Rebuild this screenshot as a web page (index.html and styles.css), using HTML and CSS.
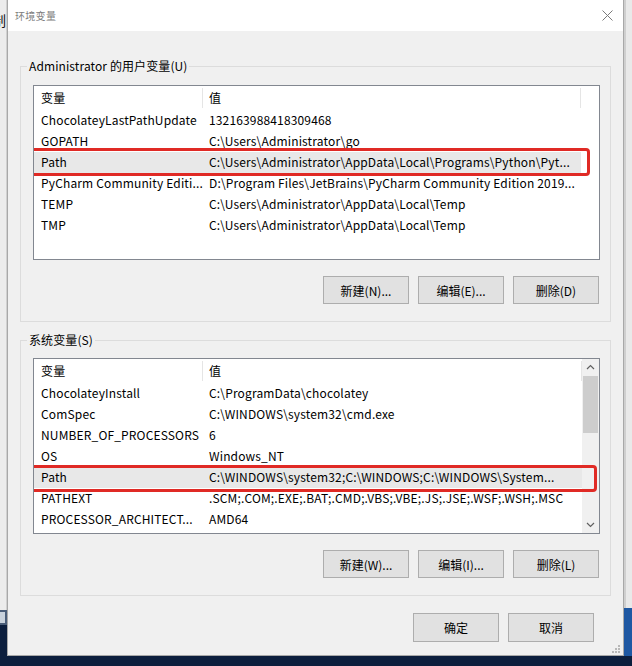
FILE: index.html
```html
<!DOCTYPE html>
<html lang="zh-CN">
<head>
<meta charset="utf-8">
<title>环境变量</title>
<link rel="stylesheet" href="styles.css">
</head>
<body>
<div class="desk-left">
  <div class="dl-top"><span class="cut-char">制</span></div>
  <div class="dl-icon"></div>
</div>
<div class="dialog">
  <div class="titlebar">
    <span class="title">环境变量</span>
    <svg class="close" width="11" height="11" viewBox="0 0 11 11"><path d="M0.5 0.5L10.5 10.5M10.5 0.5L0.5 10.5" stroke="#7a7a7a" stroke-width="1" fill="none"/></svg>
  </div>
  <div class="body">
    <div class="group">
      <div class="gtitle">Administrator 的用户变量(U)</div>
      <div class="list list-user">
        <div class="lhead"><div class="c1">变量</div><div class="c2">值</div><div class="c3"></div></div>
        <div class="row"><div class="c1">ChocolateyLastPathUpdate</div><div class="c2">132163988418309468</div></div>
        <div class="row"><div class="c1">GOPATH</div><div class="c2">C:\Users\Administrator\go</div></div>
        <div class="row sel mark-user"><div class="c1">Path</div><div class="c2">C:\Users\Administrator\AppData\Local\Programs\Python\Pyt...</div></div>
        <div class="row"><div class="c1">PyCharm Community Editi...</div><div class="c2">D:\Program Files\JetBrains\PyCharm Community Edition 2019...</div></div>
        <div class="row"><div class="c1">TEMP</div><div class="c2">C:\Users\Administrator\AppData\Local\Temp</div></div>
        <div class="row"><div class="c1">TMP</div><div class="c2">C:\Users\Administrator\AppData\Local\Temp</div></div>
      </div>
      <div class="btns">
        <button class="btn">新建(N)...</button>
        <button class="btn">编辑(E)...</button>
        <button class="btn">删除(D)</button>
      </div>
    </div>

    <div class="group group-sys">
      <div class="gtitle">系统变量(S)</div>
      <div class="list list-sys">
        <div class="lbody">
          <div class="lhead"><div class="c1">变量</div><div class="c2">值</div></div>
          <div class="row"><div class="c1">ChocolateyInstall</div><div class="c2">C:\ProgramData\chocolatey</div></div>
          <div class="row"><div class="c1">ComSpec</div><div class="c2">C:\WINDOWS\system32\cmd.exe</div></div>
          <div class="row"><div class="c1">NUMBER_OF_PROCESSORS</div><div class="c2">6</div></div>
          <div class="row"><div class="c1">OS</div><div class="c2">Windows_NT</div></div>
          <div class="row sel mark-sys"><div class="c1">Path</div><div class="c2">C:\WINDOWS\system32;C:\WINDOWS;C:\WINDOWS\System...</div></div>
          <div class="row"><div class="c1">PATHEXT</div><div class="c2">.SCM;.COM;.EXE;.BAT;.CMD;.VBS;.VBE;.JS;.JSE;.WSF;.WSH;.MSC</div></div>
          <div class="row"><div class="c1">PROCESSOR_ARCHITECT...</div><div class="c2">AMD64</div></div>
        </div>
        <div class="vscroll">
          <svg class="arrow" width="17" height="17" viewBox="0 0 17 17"><path d="M5 10L8.5 6.5L12 10" stroke="#606060" stroke-width="1.2" fill="none"/></svg>
          <div class="thumb"></div>
          <div class="track"></div>
          <svg class="arrow" width="17" height="17" viewBox="0 0 17 17"><path d="M5 7L8.5 10.5L12 7" stroke="#606060" stroke-width="1.2" fill="none"/></svg>
        </div>
      </div>
      <div class="btns">
        <button class="btn">新建(W)...</button>
        <button class="btn">编辑(I)...</button>
        <button class="btn">删除(L)</button>
      </div>
    </div>

    <div class="footer">
      <button class="btn btn-lg">确定</button>
      <button class="btn btn-lg">取消</button>
    </div>
  </div>
  <svg class="grip" width="9" height="9" viewBox="0 0 9 9" fill="#b8b8b8">
    <rect x="7" y="1" width="2" height="2"/>
    <rect x="4" y="4" width="2" height="2"/><rect x="7" y="4" width="2" height="2"/>
    <rect x="1" y="7" width="2" height="2"/><rect x="4" y="7" width="2" height="2"/><rect x="7" y="7" width="2" height="2"/>
  </svg>
</div>
<div class="desk-right">
  <div class="dr-top"></div>
  <div class="dr-blue"></div>
</div>
<div class="desk-bottom"></div>
</body>
</html>
```

FILE: styles.css
```css
* { box-sizing: border-box; }

body {
  margin: 0;
  width: 632px;
  height: 666px;
  overflow: hidden;
  display: grid;
  grid-template-columns: 7px 617px 8px;
  grid-template-rows: 656px 10px;
  background: #0c1e3d;
  font-family: "Noto Sans CJK SC", "Noto Sans", sans-serif;
  font-size: 12px;
  color: #000;
}

.desk-left {
  display: flex;
  flex-direction: column;
  overflow: hidden;
}
.dl-top {
  height: 610px;
  background: #ececec;
  border-right: 1px solid #d0d0d0;
  overflow: hidden;
  padding-top: 12px;
}
.cut-char {
  display: block;
  margin-left: -8px;
  font-size: 14px;
  line-height: 16px;
  color: #111;
}
.dl-icon {
  height: 15px;
  background: #c9d2dc;
  border: 2px solid #4a5d78;
  border-left: 0;
}

.desk-right {
  display: flex;
  flex-direction: column;
}
.dr-top {
  height: 608px;
  background: #e9e9e9;
  border-left: 2px solid #cfcfcf;
}
.dr-blue {
  flex: 1;
  background: #1e58a3;
}
.desk-bottom {
  grid-column: 1 / 4;
  background: #0c1e3d;
}

.dialog {
  position: relative;
  background: #f0f0f0;
  border: 1px solid #a8a8a8;
  border-top: 0;
  display: flex;
  flex-direction: column;
}

.titlebar {
  height: 31px;
  background: #fff;
  display: flex;
  align-items: center;
  justify-content: space-between;
  padding: 0 10px 0 7px;
}
.title {
  font-size: 10px;
  color: #7d7d7d;
  letter-spacing: 0.3px;
}

.body {
  padding: 35px 12px 0 12px;
  display: flex;
  flex-direction: column;
}

.group {
  border: 1px solid #dcdcdc;
  padding: 0 0 17px 0;
}
.group-sys {
  margin-top: 18px;
}
.gtitle {
  width: max-content;
  margin: -9px 0 0 6px;
  padding: 0 2px;
  line-height: 16px;
  background: #f0f0f0;
  letter-spacing: 0.1px;
}

.list {
  margin: 11px 10px 0 12px;
  height: 175px;
  border: 1px solid #828790;
  background: #fff;
  overflow: hidden;
  letter-spacing: 0.15px;
}
.list-sys {
  margin-top: 10px;
  height: 176px;
  display: flex;
}
.lbody {
  flex: 1;
  min-width: 0;
}

.lhead {
  height: 24px;
  display: flex;
  align-items: center;
}
.lhead .c1, .lhead .c2 {
  border-right: 1px solid #e5e5e5;
  height: 20px;
  line-height: 20px;
}
.lhead .c3 { flex: 1; }

.row {
  position: relative;
  display: flex;
  height: 21px;
  line-height: 20px;
  white-space: nowrap;
}
.c1 {
  width: 169px;
  flex: none;
  padding-left: 7px;
  overflow: hidden;
  white-space: nowrap;
}
.c2 {
  width: 378px;
  flex: none;
  padding-left: 6px;
  overflow: hidden;
  white-space: nowrap;
}
.list-sys .c2 { width: 379px; }

.row.sel { background: #e8e8e8; width: 547px; }
.list-sys .row.sel { width: 548px; }

.mark-user::after, .mark-sys::after {
  content: "";
  position: absolute;
  border: 3px solid #e02a25;
  border-radius: 4px;
}
.mark-user::after { top: -4px; bottom: -3px; left: -9px; right: -9px; }
.mark-sys::after { top: -2px; bottom: -4px; left: -13px; right: -15px; }

.vscroll {
  width: 17px;
  flex: none;
  background: #f0f0f0;
  display: flex;
  flex-direction: column;
}
.arrow { display: block; flex: none; }
.thumb {
  height: 57px;
  margin: 0 1px;
  background: #cdcdcd;
  flex: none;
}
.track { flex: 1; }

.btns {
  display: flex;
  justify-content: flex-end;
  gap: 9px;
  margin: 16px 11px 0 0;
}
.btn {
  width: 86px;
  height: 28px;
  border: 1px solid #adadad;
  background: #e1e1e1;
  font-family: inherit;
  font-size: 12px;
  color: #000;
  padding: 0;
  margin: 0;
}
.footer {
  display: flex;
  justify-content: flex-end;
  gap: 9px;
  margin: 17px 17px 0 0;
}
.btn-lg { height: 29px; }

.grip {
  position: absolute;
  right: 3px;
  bottom: 2px;
}
```
